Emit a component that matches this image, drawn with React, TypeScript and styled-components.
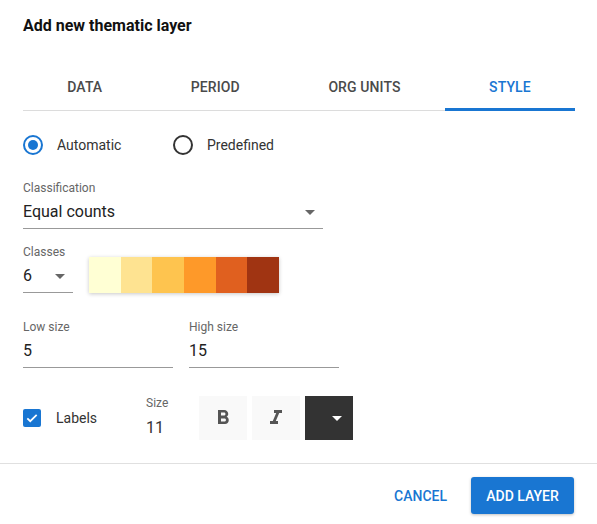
import styled, { createGlobalStyle } from "styled-components";
import { MdFormatBold, MdFormatItalic } from "react-icons/md";

const BLUE = "#1976d2";

const GlobalStyle = createGlobalStyle`
  html, body {
    margin: 0;
    padding: 0;
    background: #fff;
  }
  body {
    font-family: Roboto, "Noto Sans", sans-serif;
    color: rgba(0, 0, 0, 0.87);
  }
`;

const Dialog = styled.div`
  width: 597px;
  height: 524px;
  display: flex;
  flex-direction: column;
  background: #fff;
`;

const Header = styled.div`
  padding: 16px 22px 0 23px;
`;

const Title = styled.h2`
  margin: 0;
  font-size: 16px;
  line-height: 20px;
  font-weight: 700;
  color: #111;
`;

const Tabs = styled.div`
  display: flex;
  margin-top: 27px;
  border-bottom: 1px solid #dcdcdc;
`;

const Tab = styled.div<{ $active?: boolean }>`
  flex: 1 1 auto;
  height: 48px;
  display: flex;
  align-items: center;
  justify-content: center;
  font-size: 14px;
  font-weight: 500;
  letter-spacing: 0.1px;
  text-transform: uppercase;
  color: ${(p) => (p.$active ? BLUE : "#4a4a4a")};
  box-shadow: ${(p) => (p.$active ? `inset 0 -3px 0 ${BLUE}` : "none")};
  margin-bottom: -1px;
`;

const Content = styled.div`
  padding: 0 23px;
  flex: 1;
`;

const RadioRow = styled.div`
  display: flex;
  margin-top: 24px;
`;

const RadioItem = styled.label`
  width: 150px;
  display: flex;
  align-items: center;
  gap: 14px;
  font-size: 14px;
  color: #333;
`;

const RadioCircle = styled.span<{ $checked?: boolean }>`
  width: 20px;
  height: 20px;
  box-sizing: border-box;
  border-radius: 50%;
  border: 2px solid ${(p) => (p.$checked ? BLUE : "#333")};
  display: flex;
  align-items: center;
  justify-content: center;
  &::after {
    content: "";
    width: 10px;
    height: 10px;
    border-radius: 50%;
    background: ${(p) => (p.$checked ? BLUE : "transparent")};
  }
`;

const Field = styled.div<{ $width: number }>`
  width: ${(p) => p.$width}px;
  display: flex;
  flex-direction: column;
`;

const FieldLabel = styled.div`
  font-size: 12px;
  line-height: 14px;
  color: #666;
`;

const FieldValue = styled.div`
  margin-top: 7px;
  padding-bottom: 6px;
  border-bottom: 1px solid #999;
  display: flex;
  align-items: center;
  justify-content: space-between;
  font-size: 16px;
  line-height: 20px;
  color: #222;
`;

const Caret = styled.span<{ $color?: string; $offset?: number }>`
  width: 0;
  height: 0;
  border-left: 5px solid transparent;
  border-right: 5px solid transparent;
  border-top: 5px solid ${(p) => p.$color || "#666"};
  margin-right: ${(p) => p.$offset ?? 8}px;
`;

const Section = styled.div<{ $top: number }>`
  margin-top: ${(p) => p.$top}px;
`;

const Row = styled.div<{ $gap?: number; $align?: string }>`
  display: flex;
  gap: ${(p) => p.$gap ?? 16}px;
  align-items: ${(p) => p.$align || "flex-start"};
`;

const Ramp = styled.div`
  display: flex;
  width: 190px;
  height: 36px;
  box-shadow: 0 1px 4px rgba(0, 0, 0, 0.22);
`;

const RampCell = styled.div<{ $color: string }>`
  flex: 1;
  background: ${(p) => p.$color};
`;

const LabelsGroup = styled.label`
  width: 123px;
  display: flex;
  align-items: center;
  gap: 15px;
  font-size: 14px;
  color: #333;
`;

const CheckBox = styled.span`
  width: 18px;
  height: 18px;
  border-radius: 2px;
  background: ${BLUE};
  display: flex;
  align-items: center;
  justify-content: center;
`;

const SizeField = styled.div`
  width: 53px;
  display: flex;
  flex-direction: column;
  gap: 8px;
  margin-top: -2px;
`;

const SizeValue = styled.div`
  font-size: 16px;
  line-height: 20px;
  color: #333;
`;

const StyleButtons = styled.div`
  display: flex;
  gap: 5px;
`;

const StyleButton = styled.div<{ $dark?: boolean }>`
  width: 48px;
  height: 44px;
  display: flex;
  align-items: center;
  justify-content: ${(p) => (p.$dark ? "flex-end" : "center")};
  padding-right: ${(p) => (p.$dark ? "11px" : "0")};
  box-sizing: border-box;
  background: ${(p) => (p.$dark ? "#333" : "#f9f9f9")};
  color: #555;
`;

const Footer = styled.div`
  border-top: 1px solid #e0e0e0;
  padding: 13px 23px 10px;
  display: flex;
  justify-content: flex-end;
  align-items: center;
  gap: 8px;
`;

const TextButton = styled.button`
  border: none;
  background: none;
  font-family: inherit;
  font-size: 14px;
  font-weight: 500;
  color: ${BLUE};
  padding: 0 16px;
  height: 37px;
`;

const PrimaryButton = styled.button`
  border: none;
  border-radius: 3px;
  background: ${BLUE};
  color: #fff;
  font-family: inherit;
  font-size: 14px;
  font-weight: 500;
  width: 103px;
  height: 37px;
  box-shadow: 0 1px 3px rgba(0, 0, 0, 0.25);
`;

const rampColors = ["#ffffd4", "#fee391", "#fec44f", "#fe9929", "#e0601f", "#a03412"];

export default function App() {
  return (
    <>
      <GlobalStyle />
      <Dialog>
        <Header>
          <Title>Add new thematic layer</Title>
          <Tabs>
            <Tab>Data</Tab>
            <Tab>Period</Tab>
            <Tab>Org units</Tab>
            <Tab $active>Style</Tab>
          </Tabs>
        </Header>
        <Content>
          <RadioRow>
            <RadioItem>
              <RadioCircle $checked />
              Automatic
            </RadioItem>
            <RadioItem>
              <RadioCircle />
              Predefined
            </RadioItem>
          </RadioRow>

          <Section $top={26}>
            <Field $width={300}>
              <FieldLabel>Classification</FieldLabel>
              <FieldValue>
                Equal counts
                <Caret />
              </FieldValue>
            </Field>
          </Section>

          <Section $top={16}>
            <Row $align="flex-end">
              <Field $width={50}>
                <FieldLabel>Classes</FieldLabel>
                <FieldValue>
                  6
                  <Caret />
                </FieldValue>
              </Field>
              <Ramp>
                {rampColors.map((c) => (
                  <RampCell key={c} $color={c} />
                ))}
              </Ramp>
            </Row>
          </Section>

          <Section $top={27}>
            <Row>
              <Field $width={150}>
                <FieldLabel>Low size</FieldLabel>
                <FieldValue>5</FieldValue>
              </Field>
              <Field $width={150}>
                <FieldLabel>High size</FieldLabel>
                <FieldValue>15</FieldValue>
              </Field>
            </Row>
          </Section>

          <Section $top={28}>
            <Row $gap={0} $align="center">
              <LabelsGroup>
                <CheckBox>
                  <svg width="14" height="14" viewBox="0 0 24 24">
                    <path d="M4 12.5l5 5L20 6.5" fill="none" stroke="#fff" strokeWidth="3" />
                  </svg>
                </CheckBox>
                Labels
              </LabelsGroup>
              <SizeField>
                <FieldLabel>Size</FieldLabel>
                <SizeValue>11</SizeValue>
              </SizeField>
              <StyleButtons>
                <StyleButton>
                  <MdFormatBold size={24} />
                </StyleButton>
                <StyleButton>
                  <MdFormatItalic size={24} />
                </StyleButton>
                <StyleButton $dark>
                  <Caret $color="#fff" $offset={0} />
                </StyleButton>
              </StyleButtons>
            </Row>
          </Section>
        </Content>
        <Footer>
          <TextButton>CANCEL</TextButton>
          <PrimaryButton>ADD LAYER</PrimaryButton>
        </Footer>
      </Dialog>
    </>
  );
}
